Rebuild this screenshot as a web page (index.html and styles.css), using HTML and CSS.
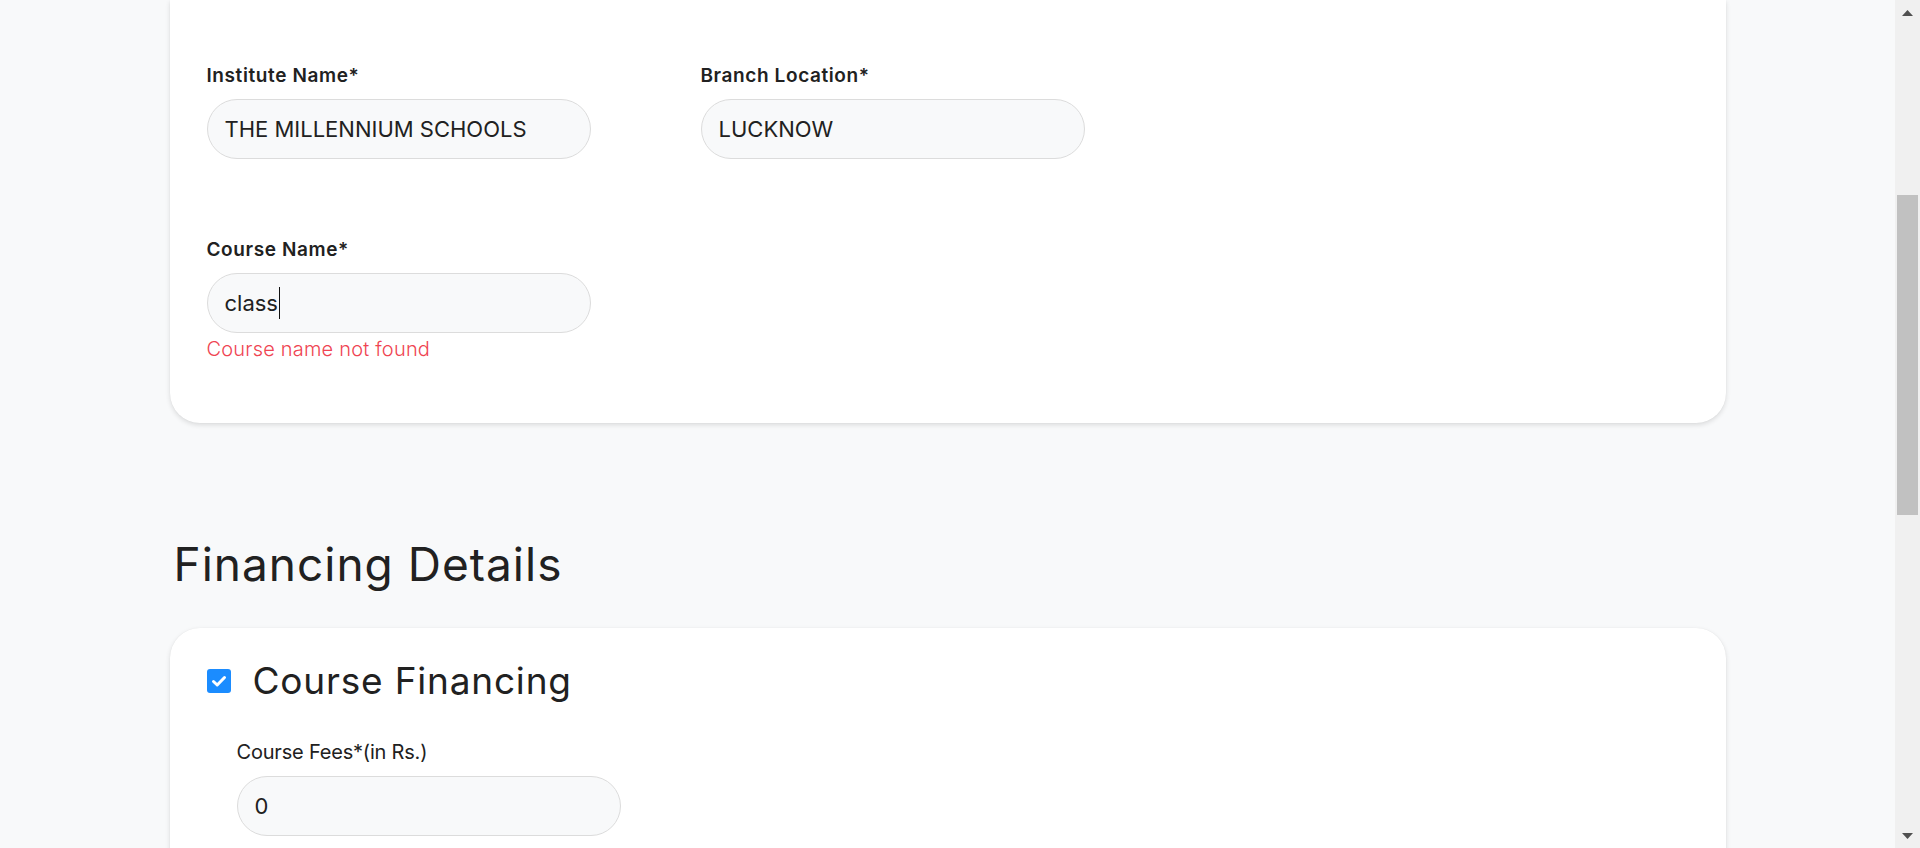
FILE: index.html
```html
<!DOCTYPE html>
<html lang="en">
<head>
<meta charset="utf-8">
<title>Course Details</title>
<link rel="stylesheet" href="styles.css">
</head>
<body>
<div class="app">
  <div class="viewport">
    <main class="page">
      <section class="section">
        <div class="card card-form">
          <div class="form-grid">
            <div class="field">
              <label class="field-label">Institute Name*</label>
              <div class="field-box">THE MILLENNIUM SCHOOLS</div>
            </div>
            <div class="field">
              <label class="field-label">Branch Location*</label>
              <div class="field-box">LUCKNOW</div>
            </div>
            <div class="field">
              <label class="field-label">Course Name*</label>
              <div class="field-box">class<span class="caret"></span></div>
              <p class="field-error">Course name not found</p>
            </div>
          </div>
        </div>
      </section>

      <section class="section section-financing">
        <h2 class="section-title">Financing Details</h2>
        <div class="card card-financing">
          <div class="option-head">
            <span class="checkbox">
              <svg width="24" height="24" viewBox="0 0 24 24"><path d="M6.5 12.5 L10.2 16 L17.5 8.5" fill="none" stroke="#fff" stroke-width="3" stroke-linecap="round" stroke-linejoin="round"/></svg>
            </span>
            <span class="option-title">Course Financing</span>
          </div>
          <div class="option-body">
            <div class="field">
              <label class="field-label field-label-light">Course Fees*(in Rs.)</label>
              <div class="field-box">0</div>
            </div>
          </div>
        </div>
      </section>
    </main>
  </div>
  <div class="scrollbar">
    <div class="sb-btn">
      <svg width="11" height="6" viewBox="0 0 11 6"><polygon points="0,6 5.5,0 11,6" fill="#505050"/></svg>
    </div>
    <div class="sb-track"><div class="sb-thumb"></div></div>
    <div class="sb-btn">
      <svg width="11" height="6" viewBox="0 0 11 6"><polygon points="0,0 5.5,6 11,0" fill="#505050"/></svg>
    </div>
  </div>
</div>
</body>
</html>
```

FILE: styles.css
```css
* { box-sizing: border-box; }

html, body { margin: 0; height: 100%; overflow: hidden; }

body {
  background: #f8f9fa;
  color: #212121;
  font-family: Inter, "Noto Sans", "Liberation Sans", sans-serif;
}

.app {
  display: flex;
  align-items: flex-start;
  height: 100vh;
}

.viewport { flex: 1; min-width: 0; }

.page {
  max-width: 1556px;
  margin: 0 auto;
}

/* scrollbar */
.scrollbar {
  width: 25px;
  height: 100vh;
  flex: none;
  background: #f0f0f0;
  display: flex;
  flex-direction: column;
}
.sb-btn {
  height: 25px;
  display: flex;
  align-items: center;
  justify-content: center;
}
.sb-track { flex: 1; padding: 0 2px; }
.sb-thumb {
  margin-top: 170px;
  height: 320px;
  background: #c1c1c1;
}

/* headings */
.section-title {
  margin: 0 0 36px;
  padding-left: 4px;
  font-size: 46px;
  line-height: 56px;
  font-weight: 400;
  letter-spacing: 1px;
  color: #212121;
}

.section-financing { margin-top: 113px; }

.card {
  background: #fff;
  border-radius: 30px;
  box-shadow: 0 2px 5px rgba(0, 0, 0, 0.12), 0 0 1px rgba(0, 0, 0, 0.08);
}

.card-form {
  border-top-left-radius: 0;
  border-top-right-radius: 0;
  padding: 64px 37px 62px;
}

.form-grid {
  display: grid;
  grid-template-columns: 384px 384px;
  column-gap: 110px;
  row-gap: 79px;
  align-items: start;
}

.field { display: flex; flex-direction: column; }

.field-label {
  font-size: 19px;
  line-height: 24px;
  font-weight: 600;
  letter-spacing: 0.6px;
  margin-bottom: 11px;
}

.field-label-light {
  font-size: 20px;
  font-weight: 400;
  line-height: 26px;
  letter-spacing: -0.2px;
}

.field-box {
  height: 60px;
  border: 1px solid #dcdcdc;
  border-radius: 30px;
  background: #f8f9fa;
  padding: 0 17px;
  display: flex;
  align-items: center;
  font-size: 22px;
  color: #212121;
}

.caret {
  display: inline-block;
  width: 1.5px;
  height: 32px;
  background: #111;
  margin-left: 1px;
}

.field-error {
  margin: 4px 0 0;
  font-size: 20px;
  line-height: 24px;
  font-weight: 300;
  letter-spacing: 0.2px;
  color: #ef4452;
}

.card-financing { padding: 31px 37px 64px; }

.option-head {
  display: flex;
  align-items: center;
  gap: 22px;
  height: 44px;
}

.checkbox {
  width: 24px;
  height: 24px;
  border-radius: 3px;
  background: #1b8cff;
  display: flex;
}

.option-title {
  font-size: 37px;
  line-height: 44px;
  font-weight: 400;
  letter-spacing: 0.8px;
}

.option-body { margin-top: 36px; padding-left: 30px; }
.option-body .field { width: 384px; }
```
